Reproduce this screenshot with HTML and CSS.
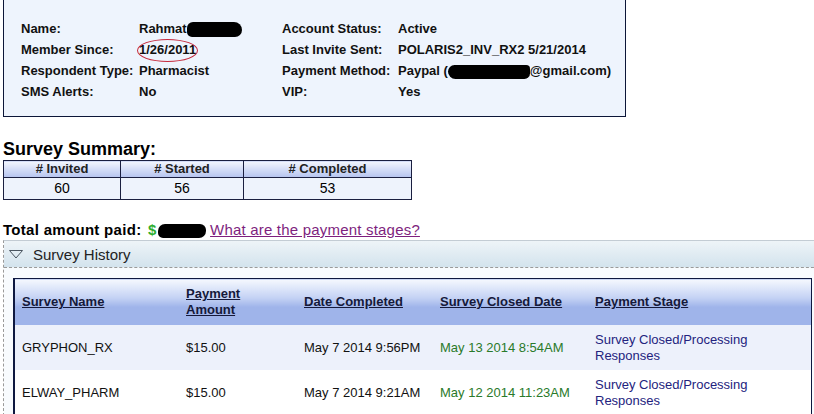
FILE: index.html
```html
<!DOCTYPE html>
<html lang="en">
<head>
    <meta charset="UTF-8">
    <title>Member Profile</title>
    <link rel="stylesheet" href="styles.css">
</head>
<body>
    <div class="page">
        <div class="info-box">
            <div class="info-grid">
                <div class="label">Name:</div>
                <div class="value">Rahmat <span class="blot blot-name"></span></div>
                <div class="label">Account Status:</div>
                <div class="value">Active</div>

                <div class="label">Member Since:</div>
                <div class="value"><span class="circled">1/26/2011</span></div>
                <div class="label">Last Invite Sent:</div>
                <div class="value">POLARIS2_INV_RX2 5/21/2014</div>

                <div class="label">Respondent Type:</div>
                <div class="value">Pharmacist</div>
                <div class="label">Payment Method:</div>
                <div class="value">Paypal (<span class="blot blot-mail"></span>@gmail.com)</div>

                <div class="label">SMS Alerts:</div>
                <div class="value">No</div>
                <div class="label">VIP:</div>
                <div class="value">Yes</div>
            </div>
        </div>

        <h2 class="summary-title">Survey Summary:</h2>
        <table class="summary">
            <tr>
                <th class="col-inv"># Invited</th>
                <th class="col-start"># Started</th>
                <th># Completed</th>
            </tr>
            <tr>
                <td>60</td>
                <td>56</td>
                <td>53</td>
            </tr>
        </table>

        <div class="total">
            Total amount paid: <span class="dollar">$</span><span class="blot blot-amount"></span>
            <a href="#" class="stages-link">What are the payment stages?</a>
        </div>

        <div class="history">
            <div class="history-head">
                <svg class="toggle" width="14" height="9" viewBox="0 0 14 9">
                    <polygon points="0.5,0.5 13.5,0.5 7,8" fill="none" stroke="#4a5560" stroke-width="1"/>
                </svg>
                <span>Survey History</span>
            </div>
            <div class="history-body">
                <table class="history-table">
                    <tr>
                        <th class="c1"><a href="#">Survey Name</a></th>
                        <th class="c2"><a href="#">Payment<br>Amount</a></th>
                        <th class="c3"><a href="#">Date Completed</a></th>
                        <th class="c4"><a href="#">Survey Closed Date</a></th>
                        <th class="c5"><a href="#">Payment Stage</a></th>
                    </tr>
                    <tr class="odd">
                        <td>GRYPHON_RX</td>
                        <td>$15.00</td>
                        <td>May 7 2014 9:56PM</td>
                        <td class="closed">May 13 2014 8:54AM</td>
                        <td class="stage">Survey Closed/Processing<br>Responses</td>
                    </tr>
                    <tr>
                        <td>ELWAY_PHARM</td>
                        <td>$15.00</td>
                        <td>May 7 2014 9:21AM</td>
                        <td class="closed">May 12 2014 11:23AM</td>
                        <td class="stage">Survey Closed/Processing<br>Responses</td>
                    </tr>
                </table>
            </div>
        </div>
    </div>
</body>
</html>
```

FILE: styles.css
```css
html {
    overflow: hidden;
}
body {
    margin: 0;
    font-family: "Liberation Sans", Arial, sans-serif;
    background-color: #ffffff;
    color: #000000;
}
.page {
    padding-left: 3px;
}
.info-box {
    width: 621px;
    margin-top: -2px;
    padding: 19px 0 14px 0;
    border: 1px solid #0c1638;
    background-color: #eef4fd;
}
.info-grid {
    display: grid;
    grid-template-columns: 118px 143px 116px auto;
    padding-left: 17px;
    font-size: 13px;
    font-weight: bold;
    line-height: 21px;
    color: #111111;
}
.blot {
    display: inline-block;
    background-color: #000000;
    vertical-align: middle;
}
.blot-name {
    width: 55px;
    height: 15px;
    margin-left: -3px;
    border-radius: 6px 8px 7px 5px;
}
.blot-mail {
    width: 82px;
    height: 14px;
    border-radius: 7px 4px 6px 8px;
}
.blot-amount {
    width: 48px;
    height: 14px;
    margin-left: 1px;
    border-radius: 7px 6px 7px 5px;
}
.circled {
    position: relative;
}
.circled::after {
    content: '';
    position: absolute;
    left: -2px;
    top: -3px;
    width: 61px;
    height: 23px;
    box-sizing: border-box;
    border: 1px solid #c5283b;
    border-radius: 50%;
}
.summary-title {
    margin: 22px 0 1px 0;
    font-size: 18px;
    line-height: 20px;
    font-weight: bold;
}
.summary {
    border-collapse: collapse;
    width: 409px;
    table-layout: fixed;
}
.summary th, .summary td {
    border: 1px solid #1a1f40;
    padding: 0;
    text-align: center;
}
.summary th {
    height: 16px;
    font-size: 13px;
    line-height: 16px;
    color: #222222;
    background: linear-gradient(#f3f6fe, #b5c4ef);
}
.summary td {
    height: 21px;
    font-size: 14px;
    line-height: 21px;
    background-color: #eef3fc;
}
.summary .col-inv {
    width: 116px;
}
.summary .col-start {
    width: 122px;
}
.total {
    margin-top: 21px;
    font-size: 15px;
    line-height: 18px;
    font-weight: bold;
    letter-spacing: 0.3px;
}
.dollar {
    margin-left: 2px;
    color: #2fae2f;
}
.stages-link {
    font-weight: normal;
    letter-spacing: 0.2px;
    color: #7e1f7e;
}
.history {
    width: 840px;
    margin-top: 1px;
    border-top: 1px solid #c3ccd4;
    border-left: 1px dashed #9a9a9a;
}
.history-head {
    display: flex;
    align-items: center;
    height: 26px;
    padding-left: 5px;
    border-bottom: 1px dashed #9a9a9a;
    background: linear-gradient(#eef4f8, #d3e3ed);
    font-size: 15px;
    color: #222222;
}
.toggle {
    margin-right: 10px;
}
.history-body {
    padding: 10px 0 0 9px;
    background-color: #f8fbfe;
}
.history-table {
    border-collapse: collapse;
    table-layout: fixed;
    width: 799px;
    border: 1px solid #0e1840;
    border-left-width: 2px;
    font-size: 13px;
}
.history-table th {
    height: 46px;
    padding: 0 0 0 7px;
    text-align: left;
    line-height: 16px;
    background: linear-gradient(#f5f8fe 0%, #c4d2f4 40%, #9fb4ea 60%, #9fb4ea 100%);
}
.history-table th a {
    color: #15193a;
}
.history-table td {
    height: 45px;
    padding: 0 0 0 7px;
    line-height: 16px;
    background-color: #ffffff;
    color: #111111;
}
.history-table .odd td {
    background-color: #edf1fb;
}
.history-table .c1 {
    width: 157px;
}
.history-table .c2 {
    width: 111px;
}
.history-table .c3 {
    width: 129px;
}
.history-table .c4 {
    width: 148px;
}
.history-table .closed {
    color: #2a7a2a;
}
.history-table .stage {
    color: #23237e;
}
```
